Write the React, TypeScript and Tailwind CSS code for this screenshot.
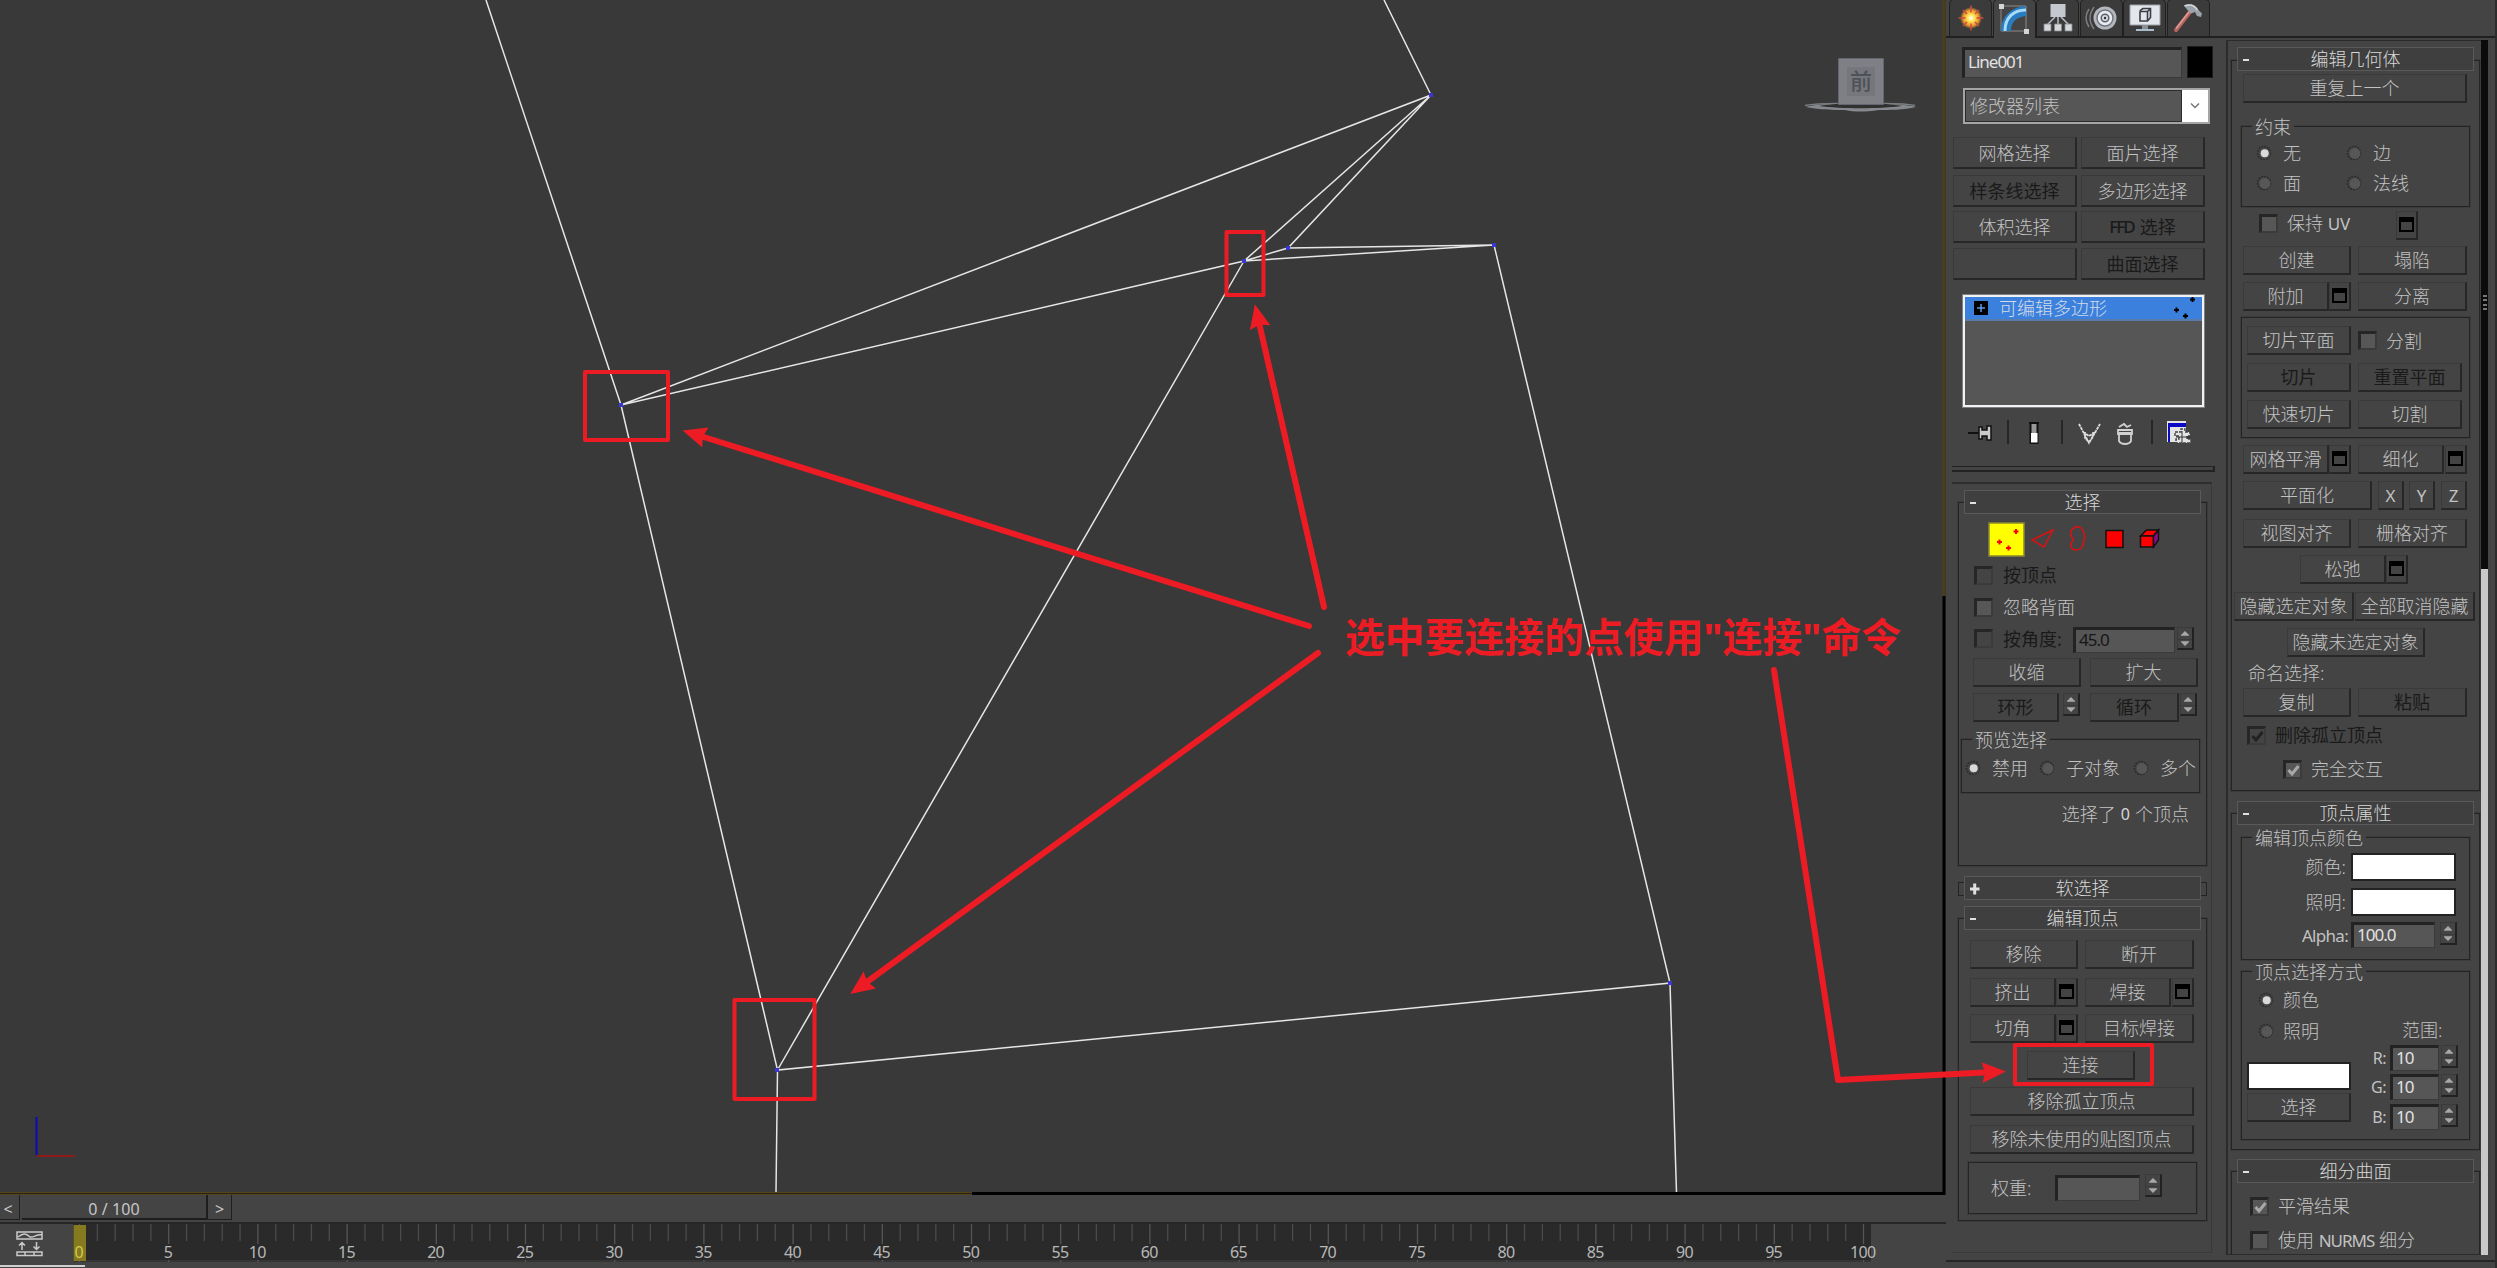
import React from 'react';
import clsx from 'clsx';

type P = { className?: string; children?: React.ReactNode; dim?: boolean };

/* ---------- small controls ---------- */

function Btn({ className, children, dim }: P) {
  return (
    <div
      className={clsx(
        'flex h-[29px] shrink-0 items-center justify-center whitespace-nowrap border-t border-l border-r-2 border-b-2 border-t-[#3a3a3a] border-l-[#3a3a3a] border-r-[#272727] border-b-[#272727] bg-[#444444]',
        dim ? 'font-normal text-[#1a1a1a]' : 'text-[#c2c2c2]',
        className,
      )}
    >
      {children}
    </div>
  );
}

function Opt({ className }: P) {
  return (
    <Btn className={clsx('w-[22px]', className)}>
      <span className="mr-[1px] mb-[1px] h-[15px] w-[15px] border-2 border-t-[5px] border-black" />
    </Btn>
  );
}

function Field({ className, children, dim }: P) {
  return (
    <div
      className={clsx(
        'flex h-[26px] shrink-0 items-center border-t-[3px] border-l-[3px] border-r border-b border-t-[#232323] border-l-[#232323] border-r-[#3a3a3a] border-b-[#3a3a3a] bg-[#565656] pb-[3px] pl-[3px] text-[17px] font-normal tracking-[-1px]',
        dim ? 'text-[#161616]' : 'text-[#e2e2e2]',
        className,
      )}
    >
      {children}
    </div>
  );
}

function Spin({ className }: P) {
  return (
    <div
      className={clsx(
        'flex h-[23px] w-[17px] shrink-0 flex-col items-center self-start border-t border-l border-r-2 border-b-2 border-t-[#3a3a3a] border-l-[#3a3a3a] border-r-[#222] border-b-[#222]',
        className,
      )}
    >
      <svg width="14" height="20" viewBox="0 0 14 20" className="fill-[#a8a8a8]">
        <path d="M7 3l4 4v0.700H3V7z" />
        <path d="M0 11h14v1H0z" className="fill-[#3a3a3a]" />
        <path d="M7 18l4-4v-0.700H3v0.700z" />
      </svg>
    </div>
  );
}

function Check({ className, on, dim }: P & { on?: boolean }) {
  return (
    <span
      className={clsx(
        'flex h-[19px] w-[19px] shrink-0 items-center justify-center border-t-[3px] border-l-[3px] border-r-2 border-b-2 border-t-[#262626] border-l-[#262626] border-r-[#3b3b3b] border-b-[#3b3b3b]',
        dim ? 'bg-[#444]' : 'bg-[#575757]',
        className,
      )}
    >
      {on && (
        <svg width="13" height="13" viewBox="0 0 13 13" fill="none" strokeWidth="3" className={dim ? 'stroke-[#222]' : 'stroke-[#a8a8a8]'}>
          <path d="M1.5 6l3.5 4 6.5-8" />
        </svg>
      )}
    </span>
  );
}

function Radio({ className, on }: P & { on?: boolean }) {
  return (
    <svg width="16" height="16" viewBox="0 0 16 16" className={clsx('shrink-0', className)}>
      <circle cx="8" cy="8" r="6.5" fill="none" stroke="#2c2c2c" strokeWidth="1.6" strokeDasharray="2 1" />
      <circle cx="9" cy="8.5" r="5.4" fill={on ? '#484848' : '#575757'} />
      {on && <circle cx="8.7" cy="8.3" r="4" fill="#dadada" />}
    </svg>
  );
}

function Header({ className, children, open = true }: P & { open?: boolean }) {
  return (
    <div
      className={clsx(
        'relative ml-[5px] flex h-[24px] w-[237px] shrink-0 items-center justify-center border border-[#595959] bg-[#3f3f3f] text-[#d8d8d8]',
        className,
      )}
    >
      <svg width="10" height="12" viewBox="0 0 10 12" className="absolute top-[6px] left-[5px] fill-[#e0e0e0]">
        {open ? <path d="M0 5h6v2H0z" /> : <path d="M0 4.500h9.500v3H0zM3.200 0.500h3v11h-3z" />}
      </svg>
      {children}
    </div>
  );
}

function Section({ className, children }: P) {
  return <section className={clsx('flex w-[249px] shrink-0 flex-col border border-[#242424] outline-1 outline-[#3b3b3b]', className)}>{children}</section>;
}

function Group({ className, children, title }: P & { title?: string }) {
  return (
    <div className={clsx('flex shrink-0 flex-col border border-[#242424] outline-1 outline-[#3c3c3c]', className)}>
      {title && <div className="z-10 -mt-[10px] ml-[10px] flex h-[20px] shrink-0 items-center self-start bg-[#444] px-[3px]">{title}</div>}
      {children}
    </div>
  );
}

function Row({ className, children }: P) {
  return <div className={clsx('flex shrink-0 items-center whitespace-nowrap', className)}>{children}</div>;
}

/* ---------- command panel tabs ---------- */

function Tab({ className, children }: P) {
  return (
    <div className={clsx('flex h-[37px] w-[43px] shrink-0 items-center justify-center rounded-t-[5px] border border-b-0 border-[#202020] bg-[#3b3b3b]', className)}>
      {children}
    </div>
  );
}

function Tabs() {
  return (
    <div className="flex h-[38px] shrink-0 items-end gap-[0.600px] border-b-2 border-[#202020] pl-[3px]">
      <Tab>
        <svg width="30" height="30" viewBox="0 0 30 30">
          <defs>
            <radialGradient id="sun">
              <stop offset="0" stopColor="#ffffff" />
              <stop offset="0.3" stopColor="#ffe95a" />
              <stop offset="0.7" stopColor="#f09a28" />
              <stop offset="1" stopColor="#f09a28" stopOpacity="0" />
            </radialGradient>
          </defs>
          <circle cx="15" cy="15" r="11" fill="url(#sun)" />
          <path d="M15 2.500v7M15 20.500v7M2.500 15h7M20.500 15h7M7 7l4 4M19 19l4 4M23 7l-4 4M11 19l-4 4" stroke="#c94a48" strokeWidth="1.500" />
        </svg>
      </Tab>
      <Tab className="z-10 -mb-[2px] h-[39px] bg-[#444444]">
        <svg width="30" height="30" viewBox="0 0 30 30" fill="none">
          <path d="M2 2h25v25H2z" stroke="#8b8b8b" strokeWidth="1" />
          <path d="M7 27C7 15 15 8 27 7" stroke="#2a7cc0" strokeWidth="10" />
          <path d="M6 27C6 14 14 6 27 6" stroke="#a8dcf6" strokeWidth="3" />
          <path d="M0 0h5v5H0zM25 25h5v5h-5z" fill="#d5d5d5" />
        </svg>
      </Tab>
      <Tab>
        <svg width="30" height="30" viewBox="0 0 30 30">
          <path d="M15 14v7M12 14L4 22M18 14l8 8" stroke="#b9bfc6" strokeWidth="1.500" />
          <path d="M7.500 1h15v13h-15z" fill="#c5c9cf" />
          <path d="M1 21h7v7H1zM11.500 21h7v7h-7zM22 21h7v7h-7z" fill="#d5d8dc" stroke="#888" strokeWidth="0.800" />
        </svg>
      </Tab>
      <Tab>
        <svg width="34" height="30" viewBox="0 0 34 30" fill="none">
          <path d="M5 6c-4 6-4 12 0 18M10 4c-5 7-5 15 0 22" stroke="#7d7d7d" strokeWidth="1.500" />
          <circle cx="21" cy="15" r="11.500" fill="#b4b8be" />
          <circle cx="21" cy="15" r="8" fill="#e9ebee" stroke="#70757d" strokeWidth="1.500" />
          <circle cx="21" cy="15" r="3.800" fill="#d4d7db" stroke="#5c6169" strokeWidth="1.500" />
          <circle cx="21" cy="15" r="1.200" fill="#333" />
        </svg>
      </Tab>
      <Tab>
        <svg width="32" height="30" viewBox="0 0 32 30">
          <path d="M1 2h30v20H1z" fill="#e3e6ea" stroke="#9da1a8" />
          <path d="M13 22h6v4h-6z" fill="#8b9098" />
          <path d="M7 26h18v2H7z" fill="#a9bccb" />
          <path d="M11 9q0-2 1.500-2.500l1.500-1h7.500v9l-3 3.500h-7.500zM11 8.500h7.500V18M18.500 8.500l3-3" fill="none" stroke="#3b3e43" strokeWidth="1.600" />
        </svg>
      </Tab>
      <Tab>
        <svg width="32" height="30" viewBox="0 0 32 30">
          <path d="M4 27L18 9" stroke="#b9655f" strokeWidth="4" strokeLinecap="round" />
          <path d="M4.500 25L17 9" stroke="#dc9e98" strokeWidth="1.500" strokeLinecap="round" />
          <path d="M12 2.500c5-2.500 11-1 14 4l4 4-1 3.500-4-1-2-4-4 1.500-4-4z" fill="#9ba2aa" />
          <path d="M12.500 3c5-2 10-1 13 4" stroke="#d4d8dc" strokeWidth="1.500" fill="none" />
        </svg>
      </Tab>
    </div>
  );
}

/* ---------- modifier stack toolbar ---------- */

function StackTools() {
  return (
    <svg width="260" height="26" viewBox="0 0 260 26" className="mt-[12px] shrink-0">
      <path d="M62 0v24M116 0v24M206 0v24" stroke="#262626" strokeWidth="2" />
      <path d="M22 13h11" stroke="#111" strokeWidth="2" />
      <path d="M33 7h3v3h5V6h4v14h-4v-4h-5v3h-3z" fill="#cacaca" stroke="#111" strokeWidth="1.500" />
      <path d="M83 3h10M84.500 4v19h7V4" stroke="#111" strokeWidth="2" fill="#999" />
      <path d="M85 13h6.500v9.500h-6.500z" fill="#fff" />
      <path d="M133 4l10 19 11-19M137 12l6 4 7-4M139 12v6l4 4 4-5v-5" stroke="#ddd" strokeWidth="1.800" fill="none" strokeDasharray="3 0.700" />
      <path d="M173 13h12v8c-2 4-10 4-12 0zM172 10h14v4h-14zM173 7l5-3 3 3 4-2" stroke="#d0d0d0" strokeWidth="1.800" fill="none" />
      <path d="M221 1h19v21h-19z" fill="#e4e4e4" />
      <path d="M223 3h17v4h-17zM222 3h2v19h-2z" fill="#0a0ac4" />
      <path d="M229 12h6v-3h4v3h5v4h-3v3h4v4h-15v-4h3v-3h-4z" fill="#e4e4e4" stroke="#444" strokeWidth="1.400" strokeDasharray="3 1" />
      <path d="M236 11v12M230 17h14" stroke="#333" strokeWidth="1" />
    </svg>
  );
}

function SubObjects() {
  return (
    <Row className="mt-[8px] h-[35px] pl-[29px]">
      <svg width="180" height="35" viewBox="0 0 180 35">
        <path d="M1 1h35v33H1z" fill="#ffff00" stroke="#8a8a30" strokeWidth="1.500" />
        <path d="M28 7v5M25.500 9.500h5M11.500 17.500v5M9 20h5M20.500 23.500v5M18 26h5" stroke="#f00" strokeWidth="2" />
        <path d="M44 18l21-10-9 17z" fill="none" stroke="#e01010" strokeWidth="1.500" />
        <path d="M88 5c5-1 8 3 8.500 9 0 8-3 14-8 14-6 0-7-5-4-9 2-3-2-4-2-7 0-4 2-6 5.500-7z" fill="none" stroke="#e01010" strokeWidth="1.500" />
        <path d="M118 8.500h17v17h-17z" fill="#f00" stroke="#111" strokeWidth="1.500" />
        <path d="M152.500 14l6-6h12l-5 6z" fill="#f00" stroke="#111" strokeWidth="1.500" />
        <path d="M152.500 14h13v11h-13z" fill="#f00" stroke="#111" strokeWidth="1.500" />
        <path d="M165.500 14l5-6v10l-5 7z" fill="#8a0a8a" stroke="#111" strokeWidth="1.500" />
      </svg>
    </Row>
  );
}

function LeftColumn() {
  return (
    <div className="flex w-[280px] flex-col">
      <Row className="mt-[8px] ml-[16px] h-[32px]">
        <Field className="h-[31px] w-[220px]">Line001</Field>
        <div className="ml-[5px] h-[32px] w-[26px] border border-[#1c1c1c] bg-black" />
      </Row>
      <div className="mt-[10px] ml-[17px] flex h-[36px] w-[247px] shrink-0 border-2 border-[#a5a5a5] bg-[#565656]">
        <div className="flex flex-1 items-center border border-[#2c2c2c] pb-[1px] pl-[4px]">修改器列表</div>
        <div className="flex w-[26px] items-center justify-center bg-white">
          <svg width="10" height="8" viewBox="0 0 10 8" fill="none" stroke="#777" strokeWidth="1.500">
            <path d="M1 1.500l4 4 4-4" />
          </svg>
        </div>
      </div>
      <Row className="mt-[13px] ml-[7px] gap-[4px]">
        <Btn className="h-[32px] w-[124px]">网格选择</Btn>
        <Btn className="h-[32px] w-[124px]">面片选择</Btn>
      </Row>
      <Row className="mt-[6px] ml-[7px] gap-[4px]">
        <Btn dim className="h-[32px] w-[124px]">样条线选择</Btn>
        <Btn className="h-[32px] w-[124px]">多边形选择</Btn>
      </Row>
      <Row className="mt-[4px] ml-[7px] gap-[4px]">
        <Btn className="h-[32px] w-[124px]">体积选择</Btn>
        <Btn dim className="h-[32px] w-[124px]"><span className="mr-[6px] text-[17px] font-medium tracking-[-2px]">FFD</span>选择</Btn>
      </Row>
      <Row className="mt-[5px] ml-[7px] gap-[4px]">
        <Btn className="h-[32px] w-[124px]" />
        <Btn dim className="h-[32px] w-[124px]">曲面选择</Btn>
      </Row>

      <div className="mt-[14px] ml-[16px] h-[114px] w-[243px] shrink-0 border-[3px] border-[#f2f2f2] bg-[#565656] outline-1 -outline-offset-1 outline-[#7d8186]">
        <div className="flex h-[24px] items-center border-b-2 border-[#5b7ba8] bg-[#3b80dd]">
          <svg width="14" height="14" viewBox="0 0 14 14" className="ml-[9px]">
            <path d="M0 0h14v14H0z" />
            <path d="M7 3v8M3 7h8" stroke="#5b9bea" strokeWidth="1.500" />
          </svg>
          <span className="ml-[11px] text-[#d3dbe6]">可编辑多边形</span>
          <svg width="26" height="24" viewBox="0 0 26 24" className="ml-auto mr-[4px]" stroke="#000" strokeWidth="2">
            <path d="M20.500 1v5M18 3.500h5M4.500 11.500v5M2 14h5M13.500 17.500v5M11 20h5" />
          </svg>
        </div>
      </div>

      <StackTools />

      <div className="mt-[20px] ml-[6px] h-[6px] w-[263px] shrink-0 border-t border-b-2 border-r-2 border-[#232323]" />

      <div className="mt-[10px] ml-[6px] flex h-[771px] w-[260px] shrink-0 flex-col border-t-2 border-r border-b border-t-[#2e2e2e] border-r-[#393939] border-b-[#393939] pl-[6px]">
        <Section className="mt-[18px] h-[364px]">
          <Header className="-mt-[13px]">选择</Header>
          <SubObjects />
          <Row className="mt-[8px] h-[20px] pl-[15px] font-normal text-[#1a1a1a]"><Check dim /><span className="ml-[10px]">按顶点</span></Row>
          <Row className="mt-[12px] h-[20px] pl-[15px]"><Check /><span className="ml-[10px]">忽略背面</span></Row>
          <Row className="mt-[10px] h-[26px] pl-[15px] font-normal text-[#1a1a1a]">
            <Check dim className="-mt-[3px]" /><span className="-mt-[3px] ml-[10px] w-[70px]">按角度:</span>
            <Field dim className="w-[102px]">45.0</Field><Spin className="ml-[2px]" />
          </Row>
          <Row className="mt-[5px] pl-[14px]"><Btn className="w-[108px]">收缩</Btn><Btn className="ml-[9px] w-[108px]">扩大</Btn></Row>
          <Row className="mt-[6px] pl-[14px]">
            <Btn dim className="w-[86px]">环形</Btn><Spin className="ml-[4px]" />
            <Btn dim className="ml-[10px] w-[89px]">循环</Btn><Spin className="ml-[1px]" />
          </Row>
          <Group title="预览选择" className="mt-[17px] ml-[2px] h-[54px] w-[239px]">
            <Row className="mt-[8px] h-[20px] pl-[3px]">
              <Radio on /><span className="ml-[11px] w-[53px]">禁用</span>
              <Radio className="-ml-[6px]" /><span className="ml-[11px] w-[73px]">子对象</span>
              <Radio className="-ml-[6px]" /><span className="ml-[11px]">多个</span>
            </Row>
          </Group>
          <Row className="mt-[11px] h-[20px] justify-end pr-[17px]">选择了<span className="mx-[5px] text-[16px] font-normal text-[#d8d8d8]">0</span>个顶点</Row>
        </Section>

        <div className="mt-[16px] flex h-[14px] w-[249px] shrink-0 border border-[#242424]">
          <Header open={false} className="-mt-[7px]">软选择</Header>
        </div>

        <Section className="mt-[22px] h-[303px]">
          <Header className="-mt-[13px]">编辑顶点</Header>
          <Row className="mt-[10px] pl-[11px]"><Btn className="w-[108px]">移除</Btn><Btn className="ml-[7px] w-[109px]">断开</Btn></Row>
          <Row className="mt-[9px] pl-[11px]">
            <Btn className="w-[86px]">挤出</Btn><Opt />
            <Btn className="ml-[7px] w-[86px]">焊接</Btn><Opt className="ml-[1px]" />
          </Row>
          <Row className="mt-[7px] pl-[11px]">
            <Btn className="w-[86px]">切角</Btn><Opt />
            <Btn className="ml-[7px] w-[109px]">目标焊接</Btn>
          </Row>
          <Row className="mt-[8px] pl-[68px]"><Btn className="w-[108px]">连接</Btn></Row>
          <Row className="mt-[7px] pl-[11px]"><Btn className="w-[224px]">移除孤立顶点</Btn></Row>
          <Row className="mt-[9px] pl-[11px]"><Btn className="w-[224px]">移除未使用的贴图顶点</Btn></Row>
          <Group className="mt-[8px] ml-[9px] h-[52px] w-[229px]">
            <Row className="mt-[11px] h-[27px] pl-[22px]">
              <span className="w-[64px]">权重:</span><Field className="w-[85px]" /><Spin className="ml-[5px]" />
            </Row>
          </Group>
        </Section>
      </div>
    </div>
  );
}

function ColorSpin({ className, label }: P & { label: string }) {
  return (
    <Row className={clsx('h-[26px]', className)}>
      <span className="w-[19px] pr-[4px] text-right text-[16px] font-normal tracking-[-0.500px]">{label}</span>
      <Field className="w-[49px]">10</Field>
      <Spin className="ml-[2px]" />
    </Row>
  );
}

function RightColumn() {
  return (
    <div className="mt-[2px] flex h-[1215px] flex-1">
      <div className="flex w-[255px] flex-col overflow-hidden border-t border-b border-l-2 border-[#2b2b2b] pl-[3px]">
        <Section className="mt-[19px] h-[731px]">
          <Header className="-mt-[14px]">编辑几何体</Header>
          <Row className="mt-[3px] pl-[11px]"><Btn className="w-[224px]">重复上一个</Btn></Row>
          <Group title="约束" className="mt-[23px] ml-[9px] h-[81px] w-[229px]">
            <Row className="mt-[6px] h-[20px] pl-[14px]"><Radio on /><span className="ml-[11px] w-[63px]">无</span><Radio /><span className="ml-[11px]">边</span></Row>
            <Row className="mt-[10px] h-[20px] pl-[14px]"><Radio /><span className="ml-[11px] w-[63px]">面</span><Radio /><span className="ml-[11px]">法线</span></Row>
          </Group>
          <Row className="mt-[4px] h-[29px] pl-[27px]">
            <Check className="-mt-[5px]" /><span className="-mt-[6px] ml-[9px] w-[109px]">保持 <span className="text-[17px] font-normal">UV</span></span><Opt />
          </Row>
          <Row className="mt-[6px] pl-[11px]"><Btn className="w-[108px]">创建</Btn><Btn className="ml-[7px] w-[109px]">塌陷</Btn></Row>
          <Row className="mt-[7px] pl-[11px]"><Btn className="w-[86px]">附加</Btn><Opt /><Btn className="ml-[7px] w-[109px]">分离</Btn></Row>
          <Group className="mt-[6px] ml-[9px] h-[121px] w-[229px]">
            <Row className="mt-[8px] pl-[5px]"><Btn className="w-[104px]">切片平面</Btn><Check className="ml-[7px]" /><span className="ml-[9px]">分割</span></Row>
            <Row className="mt-[8px] pl-[5px]"><Btn dim className="w-[104px]">切片</Btn><Btn dim className="ml-[7px] w-[104px]">重置平面</Btn></Row>
            <Row className="mt-[8px] pl-[5px]"><Btn className="w-[104px]">快速切片</Btn><Btn className="ml-[7px] w-[104px]">切割</Btn></Row>
          </Group>
          <Row className="mt-[7px] pl-[11px]">
            <Btn className="w-[86px]">网格平滑</Btn><Opt />
            <Btn className="ml-[7px] w-[86px]">细化</Btn><Opt className="ml-[1px]" />
          </Row>
          <Row className="mt-[7px] pl-[11px] text-[17px]">
            <Btn className="w-[129px] text-[18px]">平面化</Btn>
            <Btn className="ml-[6px] w-[26px] font-normal">X</Btn><Btn className="ml-[5px] w-[26px] font-normal">Y</Btn><Btn className="ml-[6px] w-[26px] font-normal">Z</Btn>
          </Row>
          <Row className="mt-[9px] pl-[11px]"><Btn className="w-[108px]">视图对齐</Btn><Btn className="ml-[7px] w-[109px]">栅格对齐</Btn></Row>
          <Row className="mt-[7px] pl-[68px]"><Btn className="w-[86px]">松弛</Btn><Opt /></Row>
          <Row className="mt-[8px] pl-[2px]"><Btn className="w-[120px]">隐藏选定对象</Btn><Btn className="ml-[1px] w-[120px]">全部取消隐藏</Btn></Row>
          <Row className="mt-[7px] pl-[55px]"><Btn className="w-[138px]">隐藏未选定对象</Btn></Row>
          <Row className="mt-[6px] h-[20px] pl-[16px]">命名选择:</Row>
          <Row className="mt-[5px] pl-[11px]"><Btn className="w-[108px]">复制</Btn><Btn dim className="ml-[7px] w-[109px]">粘贴</Btn></Row>
          <Row className="mt-[9px] h-[19px] pl-[15px] font-normal text-[#1a1a1a]"><Check on dim /><span className="-mt-[1px] ml-[9px]">删除孤立顶点</span></Row>
          <Row className="mt-[15px] h-[19px] pl-[51px]"><Check on /><span className="-mt-[1px] ml-[9px]">完全交互</span></Row>
        </Section>

        <Section className="mt-[22px] h-[337px]">
          <Header className="-mt-[13px]">顶点属性</Header>
          <Group title="编辑顶点颜色" className="mt-[12px] ml-[9px] h-[123px] w-[229px]">
            <Row className="mt-[5px] h-[28px]"><span className="w-[109px] pr-[5px] text-right">颜色:</span><div className="h-[28px] w-[105px] border-2 border-[#222] bg-white" /></Row>
            <Row className="mt-[7px] h-[28px]"><span className="w-[109px] pr-[5px] text-right">照明:</span><div className="h-[28px] w-[105px] border-2 border-[#222] bg-white" /></Row>
            <Row className="mt-[6px] h-[26px]">
              <span className="w-[109px] pr-[3px] text-right text-[17px] font-normal tracking-[-0.700px]">Alpha:</span>
              <Field className="w-[84px]">100.0</Field><Spin className="ml-[5px]" />
            </Row>
          </Group>
          <Group title="顶点选择方式" className="mt-[11px] ml-[9px] h-[169px] w-[229px]">
            <Row className="mt-[8px] h-[20px] pl-[16px]"><Radio on /><span className="ml-[9px]">颜色</span></Row>
            <Row className="mt-[11px] h-[20px] pl-[16px]"><Radio /><span className="ml-[9px] w-[119px]">照明</span><span className="-mt-[2px]">范围:</span></Row>
            <div className="flex">
              <div className="ml-[5px] w-[104px]">
                <div className="mt-[21px] h-[28px] border-2 border-[#222] bg-white" />
                <Btn className="mt-[3px]">选择</Btn>
              </div>
              <div className="ml-[20px]">
                <ColorSpin label="R:" className="mt-[4px]" />
                <ColorSpin label="G:" className="mt-[3px]" />
                <ColorSpin label="B:" className="mt-[4px]" />
              </div>
            </div>
          </Group>
        </Section>

        <Section className="mt-[21px] h-[100px]">
          <Header className="-mt-[13px]">细分曲面</Header>
          <Row className="mt-[14px] h-[19px] pl-[18px]"><Check on /><span className="-mt-[1px] ml-[9px]">平滑结果</span></Row>
          <Row className="mt-[15px] h-[19px] pl-[18px]"><Check /><span className="-mt-[2px] ml-[9px]">使用 <span className="text-[17px] font-normal tracking-[-1px]">NURMS</span> 细分</span></Row>
        </Section>
      </div>
      <div className="flex w-[7px] flex-col bg-[#0b0b0b]">
        <div className="mt-[255px] ml-[2px] flex h-[15px] w-[4px] flex-col justify-between">
          <i className="h-[2px] bg-[#777]" /><i className="h-[2px] bg-[#777]" /><i className="h-[2px] bg-[#777]" /><i className="h-[2px] bg-[#777]" />
        </div>
        <div className="mt-auto h-[686px] bg-[#c9c9c9]" />
      </div>
      <div className="-mt-[40px] ml-auto h-[1268px] w-[2px] bg-[#2c2c2c]" />
    </div>
  );
}

/* ---------- viewport ---------- */

const vertices = [
  [621, 405], [1431, 95], [1244, 261], [1288, 248], [1494, 245], [777, 1070], [1670, 983],
];

function Viewport() {
  return (
    <div className="h-[1195px] w-[1946px] shrink-0 bg-[#393939]">
      <svg width="1946" height="1195" viewBox="0 0 1946 1195" fill="none">
        <g stroke="#e6e6e6" strokeWidth="1.500">
          <path d="M486 0L621 405L777.500 1070L776 1192" />
          <path d="M1384 0L1431 95L621 405L1244 261L1431 95L1288 248L1244 261L1494 245L1288 248" />
          <path d="M1244 261L777.500 1070L1670 983L1494 245" />
          <path d="M1670 983L1676.500 1192" />
        </g>
        {vertices.map(([x, y]) => (
          <rect key={x} x={x - 2} y={y - 2} width="4" height="4" fill="#3b36d6" />
        ))}
        <path d="M36.500 1117v38" stroke="#0a0ac0" strokeWidth="2" />
        <path d="M37 1156h38" stroke="#8e1a1a" strokeWidth="2" />
        <path d="M1805 105.500c10-2 22-2 33-2M1884 103.500c12 0 22 0 31 2" stroke="#7b7e82" strokeWidth="1.500" />
        <path d="M1806 107c14-5 92-5 110 0-12 3-28 3-37 3-15 2-24 2-34 0-12 0-24 0-39-3z" fill="#85888d" />
        <path d="M1819 106c22-4 62-4 83 0-22 3-62 3-83 0z" fill="#303030" />
        <path d="M1838.500 58.500h45v46h-45z" fill="#7e8085" stroke="#63676f" />
        <path d="M1847 67h28v29h-28z" fill="#75777c" />
        <text x="1861" y="89" textAnchor="middle" fontSize="22" fontWeight="500" fill="#4e5156">前</text>
        <path d="M1943.500 0v596" stroke="#4a3e16" strokeWidth="3" />
        <path d="M0 1193.500h972" stroke="#54451a" strokeWidth="3" />
        <path d="M0 1193.500h972" stroke="#262310" strokeWidth="1" />
        <path d="M972 1193.500h972V596" stroke="#000" strokeWidth="3" />
      </svg>
    </div>
  );
}

function TimeBar() {
  const ticks = Array.from({ length: 101 }, (_, i) => i);
  return (
    <div className="flex h-[73px] w-[1946px] shrink-0 flex-col bg-[#444]">
      <div className="flex h-[27px] shrink-0 items-start text-[16px] font-normal text-[#c6c6c6]">
        <div className="flex h-[25px] w-[20px] items-center justify-center border-r border-b border-[#1e1e1e] pt-[3px] pr-[3px]">&lt;</div>
        <div className="ml-[2px] flex h-[25px] w-[186px] items-center justify-center border-r-2 border-b-2 border-[#1e1e1e] pt-[4px] tracking-[0.100px]">0 / 100</div>
        <div className="flex h-[25px] w-[24px] items-center justify-center border-r border-b border-[#1e1e1e] pt-[3px]">&gt;</div>
      </div>
      <div className="flex h-[46px] shrink-0 border-t-2 border-[#262626]">
        <div className="flex w-[73px] flex-col">
          <svg width="27" height="26" viewBox="0 0 27 26" fill="none" stroke="#c9c9c9" strokeWidth="1.500" className="mt-[7px] ml-[16px]">
            <path d="M1 1h25v7H1zM2 6c5-4 8-4 12 0 4 1 6-3 12-2M1 21h25v3.500H1zM9 21v3M18 21v3" />
            <path d="M6 19v-7M3 14.500l3-3 3 3M20.500 11v7M17.500 15.500l3 3 3-3" />
          </svg>
          <div className="mt-auto h-[3px] w-[85px] border-t-2 border-[#cfcfcf]" />
        </div>
        <svg width="1873" height="40" viewBox="73 1225 1873 40" fontSize="16" fontWeight="400" fill="#b8b8b8" textAnchor="middle">
          <path d="M73 1225h1798v38H73z" fill="#2a2a2a" />
          <path d="M73 1261h1798v2H73z" fill="#353535" />
          {ticks.map((t) => {
            const x = 79.5 + t * 17.84;
            return (
              <path
                key={t}
                d={t % 5 === 0 ? `M${x} 1225v20M${x} 1261v2` : `M${x} 1225v17`}
                stroke={t % 5 === 0 ? '#555' : '#4b4b4b'}
                strokeWidth="1.300"
              />
            );
          })}
          <path d="M73.500 1226h12.500v36h-12.500z" fill="#857a1f" />
          {ticks.filter((t) => t % 5 === 0).map((t) => (
            <text key={t} x={78.8 + t * 17.84} y="1258.500" letterSpacing="-0.700" fill={t === 0 ? '#d3c94e' : '#b8b8b8'}>{t}</text>
          ))}
        </svg>
      </div>
    </div>
  );
}

/* ---------- tutorial annotations ---------- */

function Annotations() {
  return (
    <>
      <svg width="2497" height="1268" viewBox="0 0 2497 1268" fill="none" className="pointer-events-none absolute inset-0">
        <defs>
          <marker id="head" markerUnits="userSpaceOnUse" markerWidth="30" markerHeight="24" refX="12" refY="11" orient="auto">
            <path d="M0 0.500L24 11L0 21.500L3 11z" fill="#ed1c24" />
          </marker>
        </defs>
        <g stroke="#ed1c24" strokeLinecap="round" strokeLinejoin="round">
          <g strokeWidth="4">
            <path d="M585 372h83v68h-83zM1226.500 232h37v63h-37zM734.500 1000h80v99h-80zM2015 1045h137v39h-137z" />
          </g>
          <g strokeWidth="6">
            <path d="M1309 626L694 434" markerEnd="url(#head)" />
            <path d="M1324 607L1257.500 316" markerEnd="url(#head)" />
            <path d="M1318 653L860 987" markerEnd="url(#head)" />
            <path d="M1774 670L1838 1080L1994 1072" markerEnd="url(#head)" />
          </g>
        </g>
      </svg>
      <div className="absolute top-[612px] left-[1345px] flex h-[52px] items-center whitespace-nowrap text-[39.700px] leading-none font-bold tracking-[0.150px] text-[#ed1c24]">
        选中要连接的点使用"连接"命令
      </div>
    </>
  );
}

export default function App() {
  return (
    <div className="relative flex h-[1268px] w-[2497px] overflow-hidden bg-[#444444] font-['Noto_Sans','Noto_Sans_CJK_SC',sans-serif] text-[18px] leading-none font-light text-[#c2c2c2]">
      <main className="flex w-[1946px] shrink-0 flex-col">
        <Viewport />
        <TimeBar />
      </main>
      <aside className="flex w-[551px] flex-col">
        <Tabs />
        <div className="flex h-[1224px] shrink-0 border-b-2 border-[#262626]">
          <LeftColumn />
          <RightColumn />
        </div>
      </aside>
      <Annotations />
    </div>
  );
}
